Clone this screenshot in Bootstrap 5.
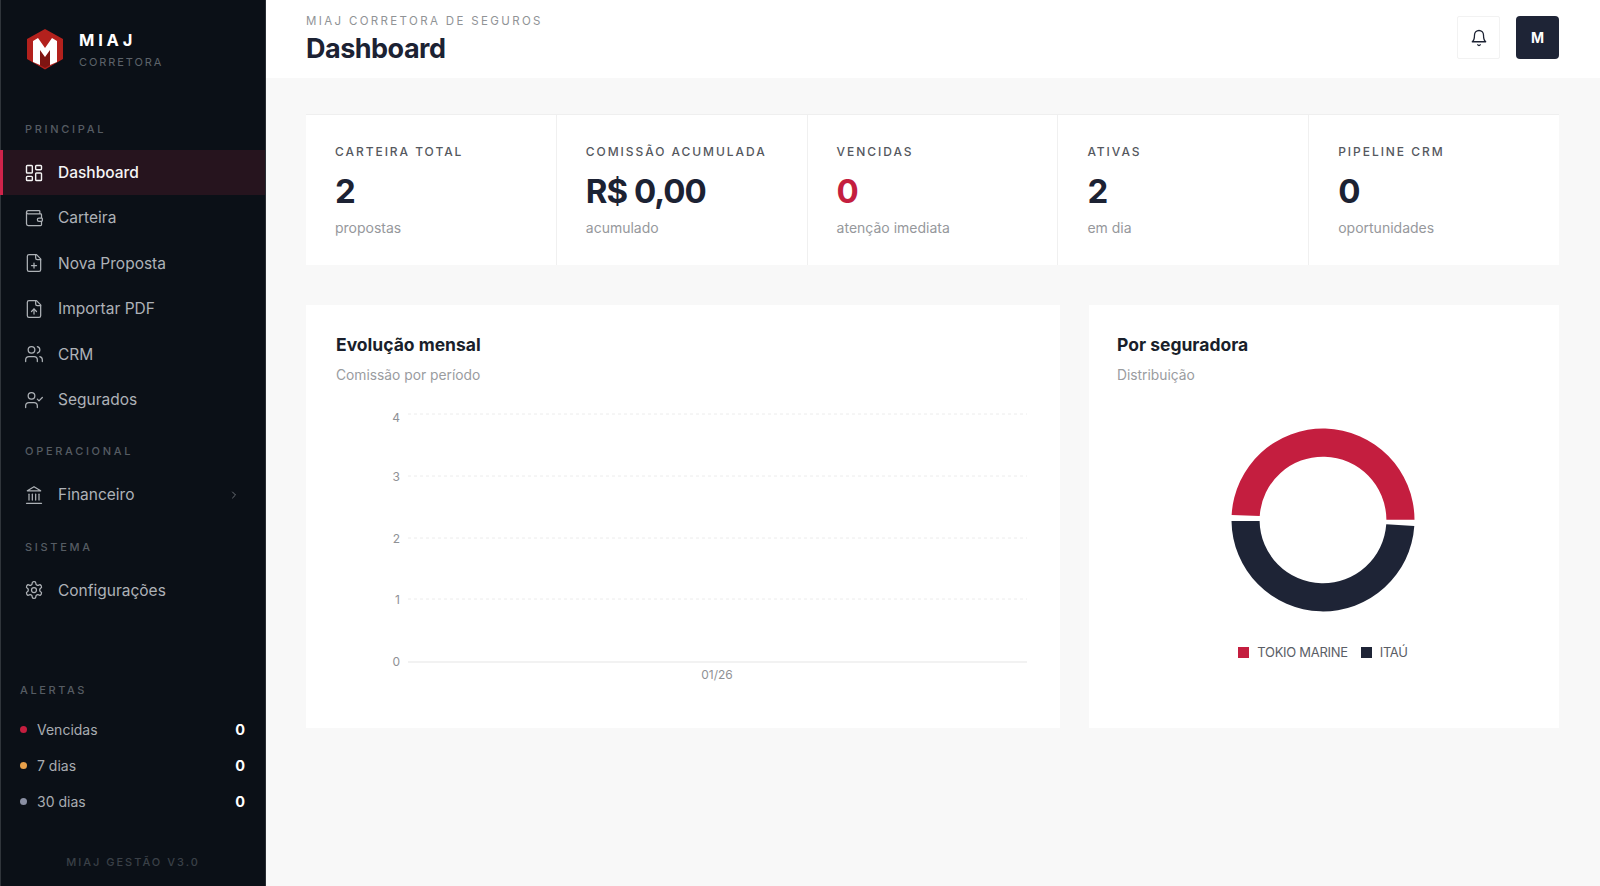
<!DOCTYPE html>
<html lang="pt-BR">
<head>
    <meta charset="UTF-8">
    <meta name="viewport" content="width=device-width, initial-scale=1.0">
    <title>Dashboard</title>
    <link rel="stylesheet" href="https://cdn.jsdelivr.net/npm/bootstrap@5.3.0/dist/css/bootstrap.min.css">
    <style>
        body { font-family: Inter, "Liberation Sans", sans-serif; background: #f8f8f8; color: #1c2233; height: 886px; overflow: hidden; }
        .lateral { width: 266px; height: 886px; background: #0b1017; border-left: 1px solid #30353b; border-right: 1px solid #2a2e34; flex-shrink: 0; }
        .marca { height: 100px; padding: 28px 0 0 25px; gap: 15px; }
        .marca-logo { width: 38px; height: 42px; }
        .marca-nome { font-size: 16.5px; font-weight: 700; letter-spacing: 3.8px; color: #fff; line-height: 20px; margin-top: 2px; }
        .marca-sub { font-size: 11px; letter-spacing: 1.9px; color: #5d636a; line-height: 14px; margin-top: 5px; }
        .secao { font-size: 11px; letter-spacing: 2.7px; color: #565c63; line-height: 14px; padding-left: 24px; font-weight: 500; }
        .secao-1 { margin-top: 22px; margin-bottom: 14px; }
        .secao-2 { margin-top: 22px; margin-bottom: 14px; }
        .item { height: 45.4px; padding: 0 25px 0 24px; gap: 14px; color: #aeb2b7; font-size: 15.5px; text-decoration: none; border-left: 3px solid transparent; margin-left: -1px; }
        .item svg { width: 20px; height: 20px; flex-shrink: 0; margin-left: -3px; }
        .item.ativo { background: #26141e; border-left-color: #d0234a; color: #f5f5f5; font-weight: 500; }
        .seta { width: 12px !important; height: 12px !important; margin-left: auto !important; color: #6a6f75; }
        .alertas { margin-top: auto; padding: 0 20px 0 19px; }
        .alertas-tit { font-size: 11px; letter-spacing: 2.6px; color: #565c63; line-height: 14px; margin-bottom: 14px; font-weight: 500; }
        .alerta { height: 36.4px; font-size: 14px; color: #a8acb1; gap: 10px; }
        .ponto { width: 7px; height: 7px; border-radius: 50%; }
        .alerta b { margin-left: auto; color: #fff; font-weight: 700; font-size: 14.5px; padding-top: 1px; }
        .rodape { font-size: 11px; letter-spacing: 2px; color: #3a4047; text-align: center; margin-top: 35px; margin-bottom: 17px; line-height: 14px; font-weight: 500; }
        .topo { height: 78px; background: #fff; padding: 0 41px 0 40px; }
        .topo-txt { padding-top: 2px; }
        .topo-sub { font-size: 11.5px; letter-spacing: 2.35px; color: #909396; line-height: 14px; }
        .topo-tit { font-size: 27px; font-weight: 700; line-height: 34px; margin: 4px 0 0; letter-spacing: -.5px; color: #1c2233; }
        .topo-acoes { margin-bottom: 3px; }
        .sino { width: 43px; height: 43px; background: #fff; border: 1px solid #f2f2f2; border-radius: 2px; margin-right: 16px; }
        .sino svg { width: 18px; height: 18px; color: #1c2233; }
        .avatar { width: 43px; height: 43px; background: #1e2436; color: #fff; font-weight: 700; font-size: 14px; border-radius: 4px; }
        .conteudo { padding: 36px 41px 0 40px; }
        .kpis { display: grid; grid-template-columns: repeat(5, 1fr); gap: 1px; background: #f0f0f0; border-top: 1px solid #efefef; height: 151px; }
        .kpi { background: #fff; padding: 29px 20px 0 29px; }
        .kpi-tit { font-size: 12px; letter-spacing: 1.95px; color: #55585e; line-height: 16px; font-weight: 500; white-space: nowrap; }
        .kpi-val { font-size: 33px; font-weight: 700; line-height: 40px; margin-top: 11px; letter-spacing: -1px; color: #1c2233; }
        .kpi-val.alerta-val { color: #c41e3f; }
        .kpi-sub { font-size: 14px; color: #96989c; line-height: 18px; margin-top: 8px; }
        .graficos { display: grid; grid-template-columns: 754px 470px; gap: 29px; margin-top: 40px; }
        .painel { background: #fff; height: 423px; padding: 28px 30px; }
        .painel-dir { padding-left: 28px; }
        .painel-tit { font-size: 17.5px; font-weight: 700; line-height: 24px; margin: 0; color: #1a1f2b; }
        .painel-sub { font-size: 13.8px; color: #9a9c9f; line-height: 18px; margin-top: 9px; }
        .grafico-linhas { display: block; margin: 22px 0 0 -30px; }
        .grafico-linhas text { font-family: Inter, "Liberation Sans", sans-serif; font-size: 12px; fill: #8f9195; }
        .rosca { display: block; margin: 36px auto 0; width: 200px; height: 200px; }
        .legenda { gap: 13px; margin-top: 23px; font-size: 13px; letter-spacing: -.3px; color: #5a5e66; }
        .legenda i { width: 11px; height: 11px; display: inline-block; margin-right: 8px; vertical-align: -1px; }
    </style>
</head>
<body>
    <div class="d-flex">
        <aside class="lateral d-flex flex-column">
            <div class="marca d-flex align-items-start">
                <svg class="marca-logo" viewBox="0 0 38 42">
                    <polygon points="19,1 37,11 37,31 19,41.500 1,31 1,11" fill="#b3211d"/>
                    <polygon points="14,37 14,22 19,29 24,22 24,37 19,40" fill="#7e1512"/>
                    <polygon points="7,34 7,13 12,10 19,20 26,10 31,13 31,34 24,37 24,22 19,29 14,22 14,37" fill="#fff"/>
                </svg>
                <div>
                    <div class="marca-nome">MIAJ</div>
                    <div class="marca-sub">CORRETORA</div>
                </div>
            </div>

            <div class="secao secao-1">PRINCIPAL</div>
            <nav class="d-flex flex-column">
                <a class="item ativo d-flex align-items-center" href="#">
                    <svg viewBox="0 0 24 24" fill="none" stroke="currentColor" stroke-width="1.700" stroke-linecap="round" stroke-linejoin="round"><rect x="3" y="3" width="7" height="9" rx="1"/><rect x="14" y="3" width="7" height="5" rx="1"/><rect x="14" y="12" width="7" height="9" rx="1"/><rect x="3" y="16" width="7" height="5" rx="1"/></svg>
                    Dashboard
                </a>
                <a class="item d-flex align-items-center" href="#">
                    <svg viewBox="0 0 24 24" fill="none" stroke="currentColor" stroke-width="1.500" stroke-linecap="round" stroke-linejoin="round"><path d="M19 7V4a1 1 0 0 0-1-1H5a2 2 0 0 0 0 4h15a1 1 0 0 1 1 1v4h-3a2 2 0 0 0 0 4h3a1 1 0 0 0 1-1v-2a1 1 0 0 0-1-1"/><path d="M3 5v14a2 2 0 0 0 2 2h15a1 1 0 0 0 1-1v-4"/></svg>
                    Carteira
                </a>
                <a class="item d-flex align-items-center" href="#">
                    <svg viewBox="0 0 24 24" fill="none" stroke="currentColor" stroke-width="1.500" stroke-linecap="round" stroke-linejoin="round"><path d="M15 2H6a2 2 0 0 0-2 2v16a2 2 0 0 0 2 2h12a2 2 0 0 0 2-2V7Z"/><path d="M14 2v4a2 2 0 0 0 2 2h4"/><path d="M9 15h6"/><path d="M12 18v-6"/></svg>
                    Nova Proposta
                </a>
                <a class="item d-flex align-items-center" href="#">
                    <svg viewBox="0 0 24 24" fill="none" stroke="currentColor" stroke-width="1.500" stroke-linecap="round" stroke-linejoin="round"><path d="M15 2H6a2 2 0 0 0-2 2v16a2 2 0 0 0 2 2h12a2 2 0 0 0 2-2V7Z"/><path d="M14 2v4a2 2 0 0 0 2 2h4"/><path d="M12 12v6"/><path d="m15 15-3-3-3 3"/></svg>
                    Importar PDF
                </a>
                <a class="item d-flex align-items-center" href="#">
                    <svg viewBox="0 0 24 24" fill="none" stroke="currentColor" stroke-width="1.500" stroke-linecap="round" stroke-linejoin="round"><path d="M16 21v-2a4 4 0 0 0-4-4H6a4 4 0 0 0-4 4v2"/><circle cx="9" cy="7" r="4"/><path d="M22 21v-2a4 4 0 0 0-3-3.870"/><path d="M16 3.130a4 4 0 0 1 0 7.750"/></svg>
                    CRM
                </a>
                <a class="item d-flex align-items-center" href="#">
                    <svg viewBox="0 0 24 24" fill="none" stroke="currentColor" stroke-width="1.500" stroke-linecap="round" stroke-linejoin="round"><path d="M16 21v-2a4 4 0 0 0-4-4H6a4 4 0 0 0-4 4v2"/><circle cx="9" cy="7" r="4"/><polyline points="16 11 18 13 22 9"/></svg>
                    Segurados
                </a>
            </nav>

            <div class="secao secao-2">OPERACIONAL</div>
            <nav class="d-flex flex-column">
                <a class="item d-flex align-items-center" href="#">
                    <svg viewBox="0 0 24 24" fill="none" stroke="currentColor" stroke-width="1.500" stroke-linecap="round" stroke-linejoin="round"><line x1="3" x2="21" y1="22" y2="22"/><line x1="6" x2="6" y1="18" y2="11"/><line x1="10" x2="10" y1="18" y2="11"/><line x1="14" x2="14" y1="18" y2="11"/><line x1="18" x2="18" y1="18" y2="11"/><polygon points="12 2 20 7 4 7"/></svg>
                    Financeiro
                    <svg class="seta" viewBox="0 0 24 24" fill="none" stroke="currentColor" stroke-width="2" stroke-linecap="round" stroke-linejoin="round"><path d="m9 18 6-6-6-6"/></svg>
                </a>
            </nav>

            <div class="secao secao-2">SISTEMA</div>
            <nav class="d-flex flex-column">
                <a class="item d-flex align-items-center" href="#">
                    <svg viewBox="0 0 24 24" fill="none" stroke="currentColor" stroke-width="1.500" stroke-linecap="round" stroke-linejoin="round"><path d="M12.220 2h-.44a2 2 0 0 0-2 2v.18a2 2 0 0 1-1 1.730l-.43.25a2 2 0 0 1-2 0l-.15-.08a2 2 0 0 0-2.730.73l-.22.38a2 2 0 0 0 .73 2.730l.15.1a2 2 0 0 1 1 1.720v.51a2 2 0 0 1-1 1.740l-.15.09a2 2 0 0 0-.73 2.730l.22.38a2 2 0 0 0 2.730.73l.15-.08a2 2 0 0 1 2 0l.43.25a2 2 0 0 1 1 1.730V20a2 2 0 0 0 2 2h.44a2 2 0 0 0 2-2v-.18a2 2 0 0 1 1-1.730l.43-.25a2 2 0 0 1 2 0l.15.08a2 2 0 0 0 2.730-.73l.22-.39a2 2 0 0 0-.73-2.730l-.15-.08a2 2 0 0 1-1-1.740v-.5a2 2 0 0 1 1-1.740l.15-.09a2 2 0 0 0 .73-2.730l-.22-.38a2 2 0 0 0-2.730-.73l-.15.08a2 2 0 0 1-2 0l-.43-.25a2 2 0 0 1-1-1.730V4a2 2 0 0 0-2-2z"/><circle cx="12" cy="12" r="3"/></svg>
                    Configurações
                </a>
            </nav>

            <div class="alertas">
                <div class="alertas-tit">ALERTAS</div>
                <div class="alerta d-flex align-items-center"><span class="ponto" style="background:#c41e3f"></span>Vencidas<b>0</b></div>
                <div class="alerta d-flex align-items-center"><span class="ponto" style="background:#e8a04a"></span>7 dias<b>0</b></div>
                <div class="alerta d-flex align-items-center"><span class="ponto" style="background:#8a8fa3"></span>30 dias<b>0</b></div>
            </div>
            <div class="rodape">MIAJ GESTÃO V3.0</div>
        </aside>

        <div class="flex-grow-1">
            <header class="topo d-flex align-items-center justify-content-between">
                <div class="topo-txt">
                    <div class="topo-sub">MIAJ CORRETORA DE SEGUROS</div>
                    <h1 class="topo-tit">Dashboard</h1>
                </div>
                <div class="topo-acoes d-flex align-items-center">
                    <div class="sino d-flex align-items-center justify-content-center">
                        <svg viewBox="0 0 24 24" fill="none" stroke="currentColor" stroke-width="1.700" stroke-linecap="round" stroke-linejoin="round"><path d="M6 8a6 6 0 0 1 12 0c0 7 3 9 3 9H3s3-2 3-9"/><path d="M10.300 21a1.940 1.940 0 0 0 3.400 0"/></svg>
                    </div>
                    <div class="avatar d-flex align-items-center justify-content-center">M</div>
                </div>
            </header>

            <main class="conteudo">
                <section class="kpis">
                    <div class="kpi"><div class="kpi-tit">CARTEIRA TOTAL</div><div class="kpi-val">2</div><div class="kpi-sub">propostas</div></div>
                    <div class="kpi"><div class="kpi-tit">COMISSÃO ACUMULADA</div><div class="kpi-val">R$ 0,00</div><div class="kpi-sub">acumulado</div></div>
                    <div class="kpi"><div class="kpi-tit">VENCIDAS</div><div class="kpi-val alerta-val">0</div><div class="kpi-sub">atenção imediata</div></div>
                    <div class="kpi"><div class="kpi-tit">ATIVAS</div><div class="kpi-val">2</div><div class="kpi-sub">em dia</div></div>
                    <div class="kpi"><div class="kpi-tit">PIPELINE CRM</div><div class="kpi-val">0</div><div class="kpi-sub">oportunidades</div></div>
                </section>

                <section class="graficos">
                    <div class="painel">
                        <h2 class="painel-tit">Evolução mensal</h2>
                        <div class="painel-sub">Comissão por período</div>
                        <svg class="grafico-linhas" width="754" height="290" viewBox="0 0 754 290">
                            <g stroke="#ececec" stroke-dasharray="3 3">
                                <line x1="102" x2="721" y1="8" y2="8"/>
                                <line x1="102" x2="721" y1="70" y2="70"/>
                                <line x1="102" x2="721" y1="132" y2="132"/>
                                <line x1="102" x2="721" y1="193" y2="193"/>
                            </g>
                            <line x1="102" x2="721" y1="256" y2="256" stroke="#eeeeee" stroke-width="1.500"/>
                            <g text-anchor="end">
                                <text x="94" y="16">4</text>
                                <text x="94" y="75">3</text>
                                <text x="94" y="137">2</text>
                                <text x="94" y="198">1</text>
                                <text x="94" y="260">0</text>
                            </g>
                            <text x="411" y="273" text-anchor="middle">01/26</text>
                        </svg>
                    </div>
                    <div class="painel painel-dir">
                        <h2 class="painel-tit">Por seguradora</h2>
                        <div class="painel-sub">Distribuição</div>
                        <svg class="rosca" viewBox="0 0 200 200">
                            <path d="M8.640 95A91.500 91.500 0 0 1 191.500 99.700L163.400 99.700A63.400 63.400 0 0 0 36.730 96Z" fill="#c41e3f"/>
                            <path d="M8.510 101A91.500 91.500 0 0 0 191.300 106L163.250 104.300A63.400 63.400 0 0 1 36.610 101Z" fill="#1e2436"/>
                        </svg>
                        <div class="legenda d-flex justify-content-center">
                            <span><i style="background:#c41e3f"></i>TOKIO MARINE</span>
                            <span><i style="background:#1e2436"></i>ITAÚ</span>
                        </div>
                    </div>
                </section>
            </main>
        </div>
    </div>
</body>
</html>
